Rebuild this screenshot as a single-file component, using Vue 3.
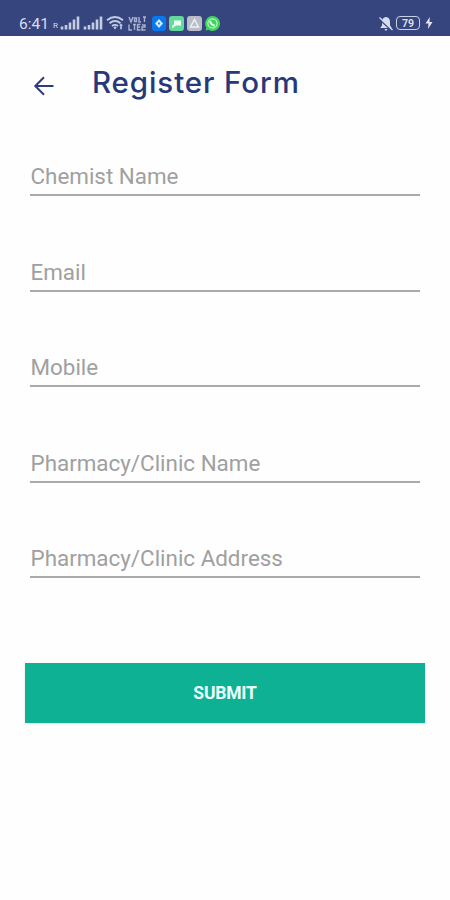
<script setup>
import { ref } from 'vue';

const fields = ref([
  { id: 'name', label: 'Chemist Name', type: 'text', value: '' },
  { id: 'email', label: 'Email', type: 'email', value: '' },
  { id: 'mobile', label: 'Mobile', type: 'tel', value: '' },
  { id: 'clinic', label: 'Pharmacy/Clinic Name', type: 'text', value: '' },
  { id: 'address', label: 'Pharmacy/Clinic Address', type: 'text', value: '' },
]);
</script>

<template>
  <div class="screen">
    <div class="status">
      <span class="time">6:41</span>
      <span class="roaming">R</span>
      <svg class="signal" width="20" height="14" viewBox="0 0 20 14">
        <path d="M2 10.5v3M6 9v4.5M10 6.5v7M14 3.5v10M18 .5v13" />
      </svg>
      <svg class="signal second" width="20" height="14" viewBox="0 0 20 14">
        <path d="M2 10.5v3M6 9v4.5M10 6.5v7M14 3.5v10M18 .5v13" />
      </svg>
      <svg class="wifi" width="18" height="14" viewBox="0 0 18 14">
        <path d="M1 4.2Q9-2 17 4.2M3.5 7.2Q9 3 14.5 7.2M6 10Q9 7.8 12 10" />
        <path class="fill" d="M7.3 11.2Q9 10 10.7 11.2L9 13.4z M13 9.5l2-2 2 2h-1.2v3.8h-1.6V9.5z" />
      </svg>
      <svg class="volte" width="18" height="15" viewBox="0 0 18 15">
        <path d="M1 1l2 5 2-5M6.5 2v3.5h2V2zM11 1v5h2M15 1h3M16.5 1v5M1 8.5v5.5h3M5 8.5h3M6.5 8.5V14M12.5 8.5H9.5V14h3M9.5 11h2.5M14 9h3v2h-3v3h3.5" />
      </svg>
      <svg class="app blue" width="14" height="15" viewBox="0 0 14 15">
        <rect width="14" height="15" rx="3" fill="#0878ee" />
        <path d="M7 3l4 4.5L7 12 3 7.5z" fill="#d7eaff" />
        <path d="M7 6l1.3 1.5L7 9 5.7 7.5z" fill="#2388f0" />
      </svg>
      <svg class="app" width="15" height="15" viewBox="0 0 15 15">
        <rect width="15" height="15" rx="3" fill="#63d99a" />
        <path d="M5 4.5h7v5H7l-4 3V9.5l2-1z" fill="#e9fff3" />
      </svg>
      <svg class="app" width="15" height="15" viewBox="0 0 15 15">
        <rect width="15" height="15" rx="3" fill="#b8bdc8" />
        <path d="M7.5 3.5l4 7.5h-8z" fill="none" stroke="#edf0f6" stroke-width="1.5" />
      </svg>
      <svg class="app" width="15" height="15" viewBox="0 0 15 15">
        <path d="M7.5 0a7.5 7.5 0 1 1-4 13.8L.7 14.5l.6-3A7.5 7.5 0 0 1 7.5 0z" fill="#3fd45b" />
        <circle cx="7.5" cy="7.4" r="4.6" fill="none" stroke="#c3f4ca" stroke-width="1.2" />
        <path d="M5.2 4.8q.4 4 4.7 5" fill="none" stroke="#e8ffe9" stroke-width="1.9" />
      </svg>
      <span class="gap"></span>
      <svg class="bell" width="14" height="15" viewBox="0 0 14 15">
        <path d="M7 1q4 .5 4 5v3.5l1.5 2v.5h-11v-.5l1.5-2V6q0-4.5 4-5zM5.5 13h3q-.4 1.5-1.5 1.5T5.5 13z" fill="#d8ddec" />
        <path d="M.5 3.5L12 14" stroke="#37457f" stroke-width="1.5" />
        <path d="M.5 1.5L13.5 14" stroke="#d8ddec" stroke-width="1.3" />
      </svg>
      <span class="battery">79</span>
      <svg class="bolt" width="8" height="12" viewBox="0 0 8 12">
        <path d="M4.8 0L.5 6.5h3L3 12l4.5-7h-3z" fill="#e2e7f3" />
      </svg>
    </div>

    <header>
      <button class="back" type="button" aria-label="Back">
        <svg width="22" height="22" viewBox="0 0 22 22">
          <path d="M20.5 11H2.3M11 2.3L2.3 11l8.7 8.7" />
        </svg>
      </button>
      <h1>Register Form</h1>
    </header>

    <form @submit.prevent>
      <div v-for="field in fields" :key="field.id" class="field">
        <input v-model="field.value" :type="field.type" :placeholder="field.label" />
      </div>
      <button class="submit" type="submit">SUBMIT</button>
    </form>
  </div>
</template>

<style>
body { margin: 0; background: #fefefe; }
</style>

<style scoped>
.screen { height: 900px; background: #fefefe; font-family: Roboto, sans-serif; overflow: hidden; }

.status { display: flex; align-items: center; height: 36px; padding: 10px 17px 0 19px;
  box-sizing: border-box; background: #37457f; color: #d8ddec; }
.status svg { flex: none; }
.time { width: 29px; font-size: 15.5px; line-height: 16px; padding-top: 1px; }
.roaming { width: 5px; margin-left: 5px; padding-top: 6px; font-size: 8px; line-height: 8px; }
.signal { margin-left: 2px; fill: none; stroke: #c4cce2; stroke-width: 2.6; }
.second { margin-left: 3px; }
.wifi { margin-left: 3px; fill: none; stroke: #c4cce2; stroke-width: 1.9; }
.wifi .fill { fill: #c4cce2; stroke: none; }
.volte { margin-left: 4px; fill: none; stroke: #a9b3d0; stroke-width: 1.4; }
.app { margin-left: 3px; }
.blue { margin-left: 6px; }
.gap { flex: 1; }
.battery { width: 24px; height: 14px; margin-left: 3px; border: 1.5px solid #c9d0e3;
  border-radius: 4px; box-sizing: border-box; text-align: center;
  font-size: 10.5px; font-weight: 700; line-height: 13px; }
.bolt { margin-left: 5px; }

header { display: flex; align-items: center; height: 96px; padding-left: 33px; box-sizing: border-box; }
.back { width: 22px; height: 22px; margin-top: 3px; padding: 0; border: 0; background: none; }
.back svg { display: block; fill: none; stroke: #2f3b7c; stroke-width: 2; }
h1 { margin: -5px 0 0 37px; font-family: Inter, sans-serif; font-size: 29.5px; font-weight: 500;
  line-height: 36px; letter-spacing: 0.9px; color: #273979; white-space: nowrap; }

form { padding: 24px 25px 0; }
.field { height: 95.5px; padding: 0 5px; }
input { display: block; width: 100%; height: 40px; padding: 2px 0 0 0.5px; border: 0;
  border-bottom: 2px solid #aaa; border-radius: 0; box-sizing: border-box; outline: 0;
  background: none; font: 400 22.4px Roboto, sans-serif; color: #555; }
input::placeholder { color: #a0a0a0; opacity: 1; }
.submit { display: block; width: 400px; height: 60px; margin-top: 29px; padding: 0; border: 0;
  background: #0fb195; box-shadow: 0 1px 2px #ddd; color: #eefffb;
  font: 700 17.5px Roboto, sans-serif; letter-spacing: -0.2px; }
</style>
